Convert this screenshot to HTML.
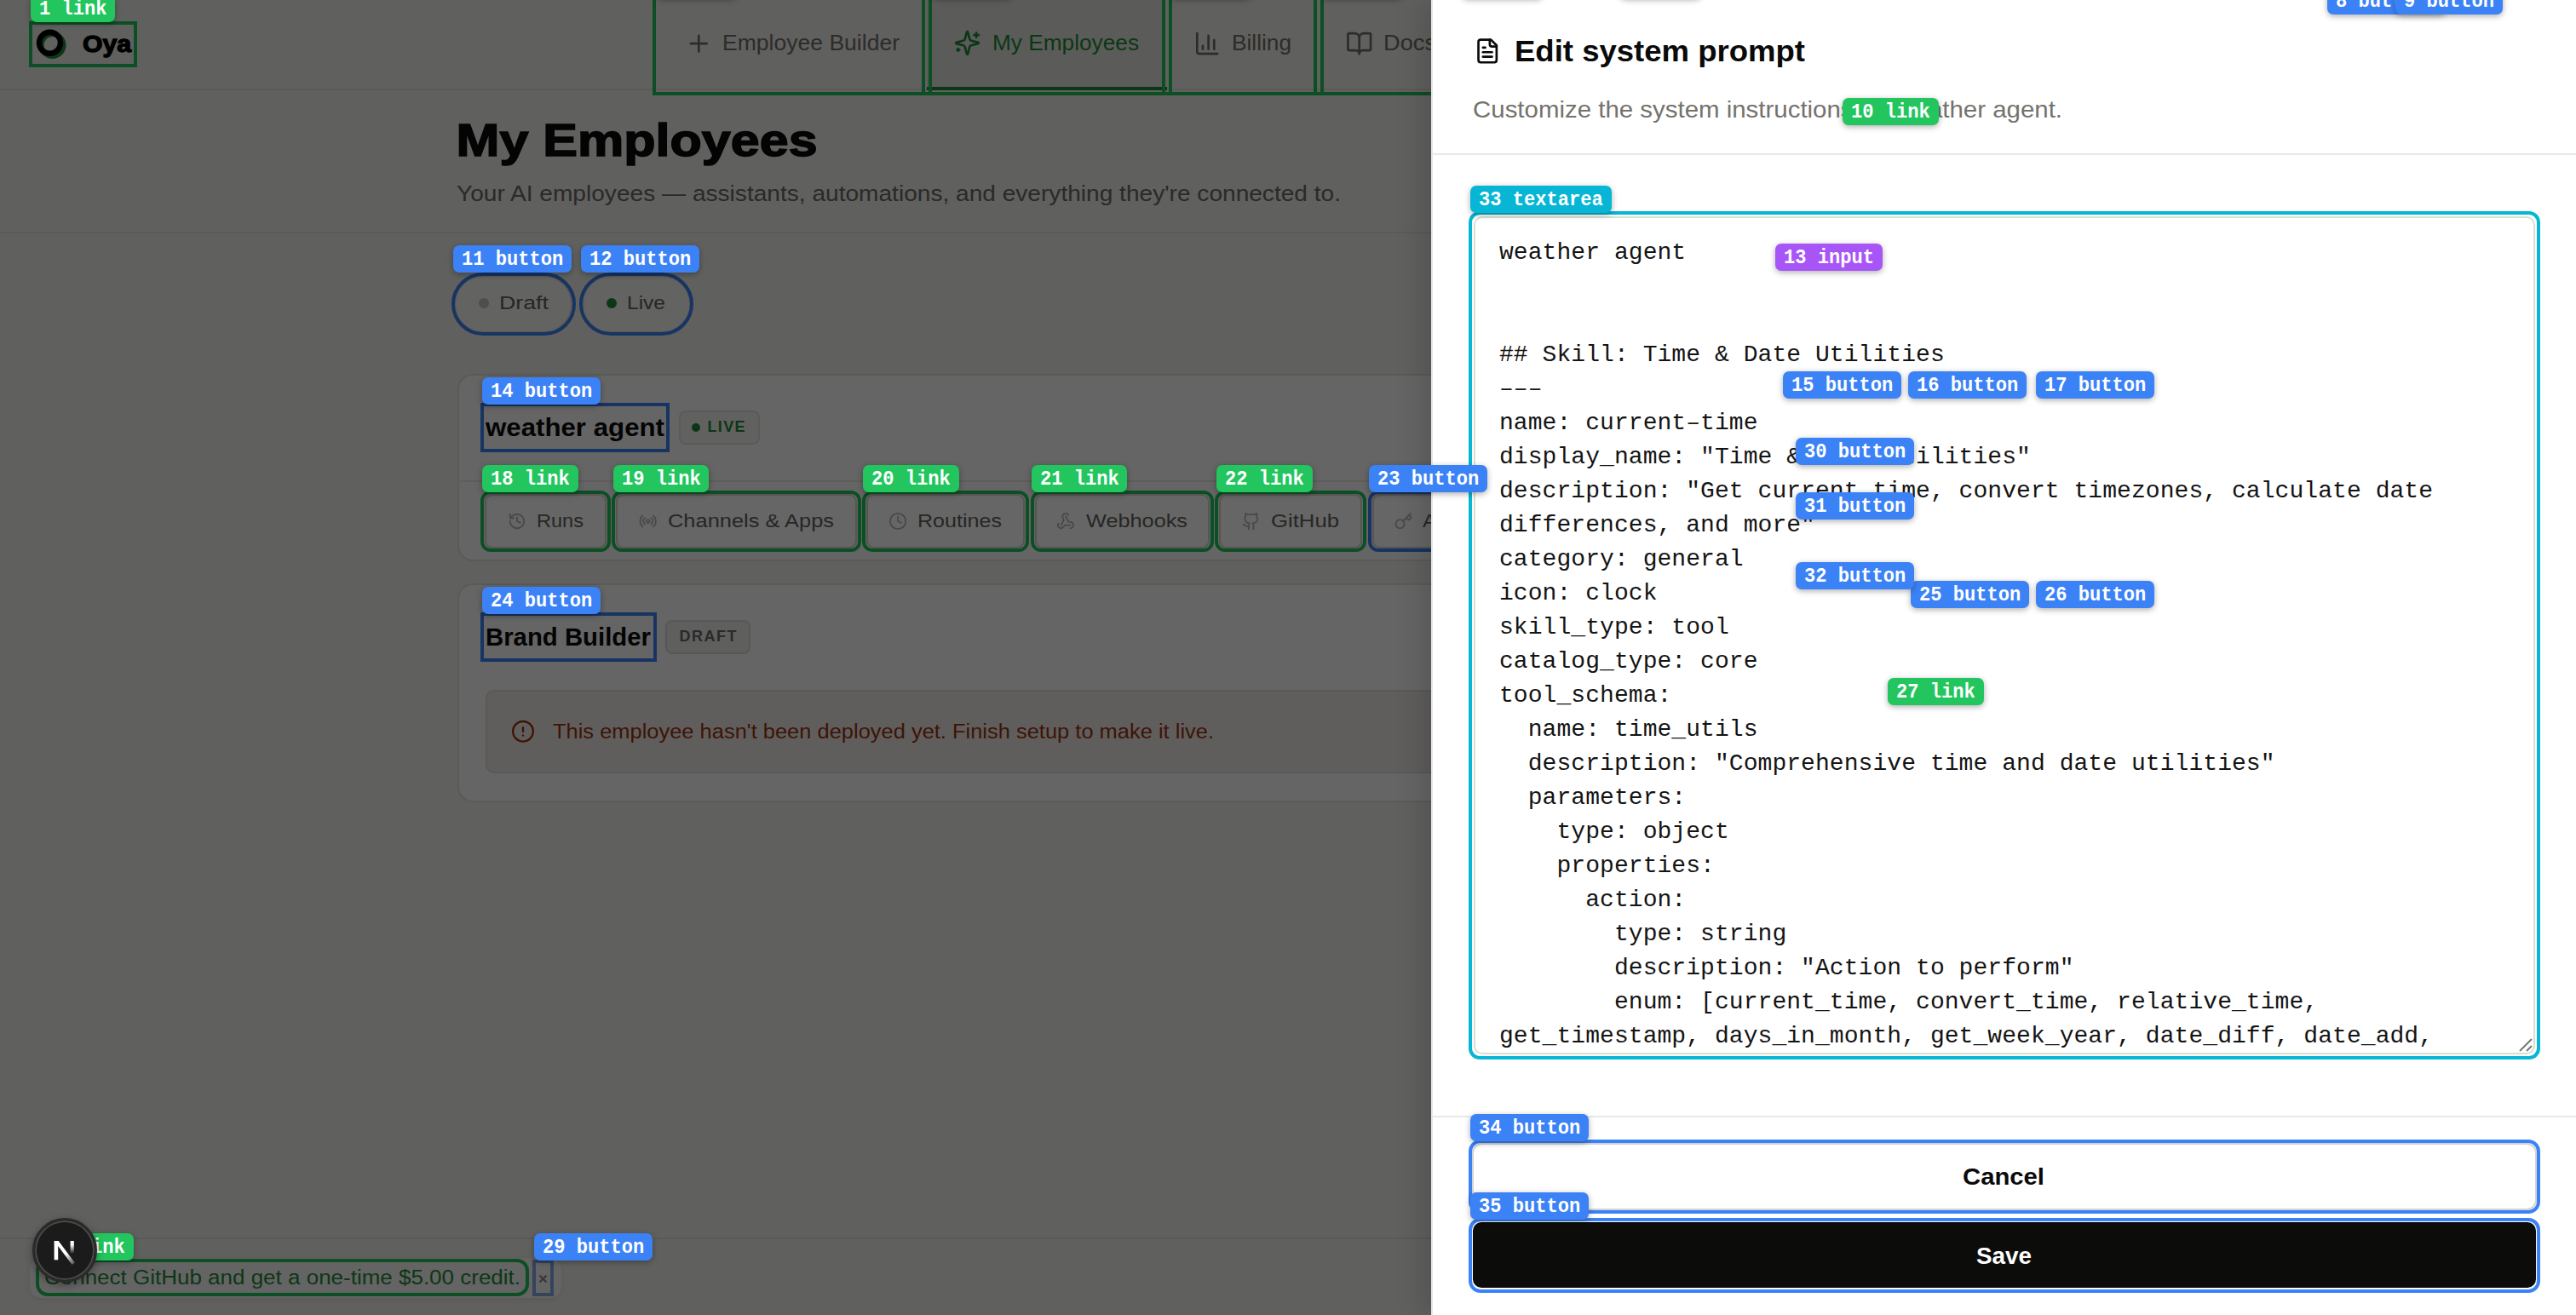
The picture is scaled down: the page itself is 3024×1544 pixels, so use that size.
<!DOCTYPE html><html><head><meta charset="utf-8"><style>
html,body{margin:0;padding:0;width:3024px;height:1544px;overflow:hidden;background:#f1f0ea;}
.a{position:absolute;box-sizing:border-box;}
.lbl span{display:inline-block;position:relative;top:3.2px;transform:scaleX(.92);transform-origin:0 0;}
.lbl{height:32px;line-height:32px;padding:0 0 0 10px;border-radius:7px;color:#fff;font:700 24px "Liberation Mono",monospace;white-space:nowrap;box-shadow:0 2px 7px rgba(0,0,0,.32);overflow:hidden;}
</style></head><body>
<div class="a" style="left:0px;top:0px;width:1680px;height:1544px;background:#f1f0ea;"></div>
<div class="a" style="left:0px;top:104px;width:1680px;height:2px;background:#e4e2dc;"></div>
<div class="a" style="left:0px;top:272px;width:1680px;height:2px;background:#e4e2dc;"></div>
<div class="a" style="left:1088px;top:0px;width:280px;height:102px;background:#e3e7de;"></div>
<div class="a" style="left:1088px;top:102px;width:282px;height:4px;background:#1f8a3a;"></div>
<div class="a" style="left:533px;top:323px;width:139px;height:68px;border:2px solid #e2e0da;border-radius:34px;background:#f8f7f4;"></div>
<div class="a" style="left:683px;top:323px;width:128px;height:68px;border:2px solid #e2e0da;border-radius:34px;background:#f8f7f4;"></div>
<div class="a" style="left:562px;top:350px;width:12px;height:12px;background:#c4c4c0;border-radius:6px;"></div>
<div class="a" style="left:712px;top:350px;width:12px;height:12px;background:#1f8a3a;border-radius:6px;"></div>
<div class="a" style="left:537px;top:439px;width:1363px;height:220px;border:2px solid #e2e0da;border-radius:18px;background:#fdfdfc;"></div>
<div class="a" style="left:537px;top:564px;width:1143px;height:2px;background:#ebe9e4;"></div>
<div class="a" style="left:797px;top:482px;width:95px;height:40px;border:2px solid #e3e1dc;border-radius:8px;background:#f3f2ee;"></div>
<div class="a" style="left:812px;top:497px;width:10px;height:10px;background:#1f8a3a;border-radius:5px;"></div>
<div class="a" style="left:569px;top:580px;width:143px;height:64px;border:2px solid #d6d4ce;border-radius:9px;background:#fff;"></div>
<div class="a" style="left:723px;top:580px;width:283px;height:64px;border:2px solid #d6d4ce;border-radius:9px;background:#fff;"></div>
<div class="a" style="left:1017px;top:580px;width:186px;height:64px;border:2px solid #d6d4ce;border-radius:9px;background:#fff;"></div>
<div class="a" style="left:1215px;top:580px;width:205px;height:64px;border:2px solid #d6d4ce;border-radius:9px;background:#fff;"></div>
<div class="a" style="left:1431px;top:580px;width:168px;height:64px;border:2px solid #d6d4ce;border-radius:9px;background:#fff;"></div>
<div class="a" style="left:1611px;top:580px;width:169px;height:64px;border:2px solid #d6d4ce;border-radius:9px;background:#fff;"></div>
<div class="a" style="left:537px;top:685px;width:1363px;height:257px;border:2px solid #e2e0da;border-radius:18px;background:#fdfdfc;"></div>
<div class="a" style="left:781px;top:728px;width:100px;height:40px;border:2px solid #dcdad4;border-radius:8px;background:#eeede9;"></div>
<div class="a" style="left:570px;top:810px;width:1330px;height:98px;border:2px solid #e3dcd6;border-radius:10px;background:#efebe7;"></div>
<div class="a" style="left:0px;top:1453px;width:1680px;height:2px;background:#e4e2dc;"></div>
<div class="a" style="left:35px;top:1477px;width:624px;height:47px;background:#fbfbf9;border-radius:14px;box-shadow:0 2px 8px rgba(0,0,0,.08);"></div>
<svg class="a" style="left:0;top:0;" width="3024" height="1544" viewBox="0 0 3024 1544"><circle cx="61.5" cy="53" r="13" fill="none" stroke="#1f8a3a" stroke-width="6"/><circle cx="58.5" cy="50.3" r="12.5" fill="none" stroke="#000" stroke-width="6.5"/><text x="97" y="61.3" font-family="Liberation Sans" font-size="28" font-weight="700" fill="#000" textLength="57" lengthAdjust="spacingAndGlyphs" stroke="#000" stroke-width="1.3">Oya</text><g transform="translate(804.3,35.2) scale(1.3333333333333333)" fill="none" stroke="#6e6e6a" stroke-width="2" stroke-linecap="round" stroke-linejoin="round"><path d="M5 12h14"/><path d="M12 5v14"/></g><text x="848" y="59" font-family="Liberation Sans" font-size="26.5" font-weight="400" fill="#6e6e6a" textLength="208" lengthAdjust="spacingAndGlyphs" stroke="#6e6e6a" stroke-width="0">Employee Builder</text><g transform="translate(1119.5,34.5) scale(1.3333333333333333)" fill="none" stroke="#1f8a3a" stroke-width="2" stroke-linecap="round" stroke-linejoin="round"><path d="M9.937 15.5A2 2 0 0 0 8.5 14.063l-6.135-1.582a.5.5 0 0 1 0-.962L8.5 9.936A2 2 0 0 0 9.937 8.5l1.582-6.135a.5.5 0 0 1 .963 0L14.063 8.5A2 2 0 0 0 15.5 9.937l6.135 1.581a.5.5 0 0 1 0 .964L15.5 14.063a2 2 0 0 0-1.437 1.437l-1.582 6.135a.5.5 0 0 1-.963 0z"/><path d="M20 3v4"/><path d="M22 5h-4"/><path d="M4 17v2"/><path d="M5 18H3"/></g><text x="1165" y="59" font-family="Liberation Sans" font-size="26.5" font-weight="400" fill="#1f8a3a" textLength="172" lengthAdjust="spacingAndGlyphs" stroke="#1f8a3a" stroke-width="0">My Employees</text><g transform="translate(1401.3,35.1) scale(1.3333333333333333)" fill="none" stroke="#6e6e6a" stroke-width="2" stroke-linecap="round" stroke-linejoin="round"><path d="M3 3v16a2 2 0 0 0 2 2h16"/><path d="M18 17V9"/><path d="M13 17V5"/><path d="M8 17v-3"/></g><text x="1446" y="59" font-family="Liberation Sans" font-size="26.5" font-weight="400" fill="#6e6e6a" textLength="70" lengthAdjust="spacingAndGlyphs" stroke="#6e6e6a" stroke-width="0">Billing</text><g transform="translate(1579.7,35.1) scale(1.3333333333333333)" fill="none" stroke="#6e6e6a" stroke-width="2" stroke-linecap="round" stroke-linejoin="round"><path d="M12 7v14"/><path d="M3 18a1 1 0 0 1-1-1V4a1 1 0 0 1 1-1h5a4 4 0 0 1 4 4 4 4 0 0 1 4-4h5a1 1 0 0 1 1 1v13a1 1 0 0 1-1 1h-6a3 3 0 0 0-3 3 3 3 0 0 0-3-3z"/></g><text x="1624" y="59" font-family="Liberation Sans" font-size="26.5" font-weight="400" fill="#6e6e6a" textLength="62" lengthAdjust="spacingAndGlyphs" stroke="#6e6e6a" stroke-width="0">Docs</text><text x="535.6" y="183.4" font-family="Liberation Sans" font-size="54" font-weight="700" fill="#0a0a0a" textLength="424" lengthAdjust="spacingAndGlyphs" stroke="#0a0a0a" stroke-width="1.6">My Employees</text><text x="536" y="235.5" font-family="Liberation Sans" font-size="25" font-weight="400" fill="#6a6a66" textLength="1038" lengthAdjust="spacingAndGlyphs" >Your AI employees — assistants, automations, and everything they&#x27;re connected to.</text><text x="586" y="362.6" font-family="Liberation Sans" font-size="22.5" font-weight="400" fill="#5f5f5b" textLength="58" lengthAdjust="spacingAndGlyphs" stroke="#5f5f5b" stroke-width="0">Draft</text><text x="736" y="362.6" font-family="Liberation Sans" font-size="22.5" font-weight="400" fill="#5f5f5b" textLength="45" lengthAdjust="spacingAndGlyphs" stroke="#5f5f5b" stroke-width="0">Live</text><text x="570" y="512" font-family="Liberation Sans" font-size="30" font-weight="700" fill="#0a0a0a" textLength="210" lengthAdjust="spacingAndGlyphs" >weather agent</text><text x="830.5" y="507.2" font-family="Liberation Sans" font-size="18" font-weight="700" fill="#1f8a3a" textLength="44" lengthAdjust="spacing" >LIVE</text><g transform="translate(596,601) scale(0.9166666666666666)" fill="none" stroke="#b5b5b0" stroke-width="2" stroke-linecap="round" stroke-linejoin="round"><path d="M3 12a9 9 0 1 0 9-9 9.75 9.75 0 0 0-6.74 2.74L3 8"/><path d="M3 3v5h5"/><path d="M12 7v5l4 2"/></g><text x="630" y="618.6" font-family="Liberation Sans" font-size="22.5" font-weight="400" fill="#5f5f5b" textLength="55" lengthAdjust="spacingAndGlyphs" stroke="#5f5f5b" stroke-width="0">Runs</text><g transform="translate(749.7,601) scale(0.9166666666666666)" fill="none" stroke="#b5b5b0" stroke-width="2" stroke-linecap="round" stroke-linejoin="round"><path d="M4.9 19.1C1 15.2 1 8.8 4.9 4.9"/><path d="M7.8 16.2c-2.3-2.3-2.3-6.1 0-8.5"/><circle cx="12" cy="12" r="2"/><path d="M16.2 7.8c2.3 2.3 2.3 6.1 0 8.5"/><path d="M19.1 4.9C23 8.8 23 15.1 19.1 19"/></g><text x="784" y="618.6" font-family="Liberation Sans" font-size="22.5" font-weight="400" fill="#5f5f5b" textLength="195" lengthAdjust="spacingAndGlyphs" stroke="#5f5f5b" stroke-width="0">Channels &amp; Apps</text><g transform="translate(1043.1,601) scale(0.9166666666666666)" fill="none" stroke="#b5b5b0" stroke-width="2" stroke-linecap="round" stroke-linejoin="round"><circle cx="12" cy="12" r="10"/><polyline points="12 6 12 12 16 14"/></g><text x="1077" y="618.6" font-family="Liberation Sans" font-size="22.5" font-weight="400" fill="#5f5f5b" textLength="99" lengthAdjust="spacingAndGlyphs" stroke="#5f5f5b" stroke-width="0">Routines</text><g transform="translate(1240,601) scale(0.9166666666666666)" fill="none" stroke="#b5b5b0" stroke-width="2" stroke-linecap="round" stroke-linejoin="round"><path d="M18 16.98h-5.99c-1.1 0-1.95.94-2.48 1.9A4 4 0 0 1 2 17c.01-.7.2-1.4.57-2"/><path d="m6 17 3.13-5.78c.53-.97.1-2.18-.5-3.1a4 4 0 1 1 6.89-4.06"/><path d="m12 6 3.13 5.73C15.66 12.7 16.9 13 18 13a4 4 0 0 1 0 8"/></g><text x="1275" y="618.6" font-family="Liberation Sans" font-size="22.5" font-weight="400" fill="#5f5f5b" textLength="119" lengthAdjust="spacingAndGlyphs" stroke="#5f5f5b" stroke-width="0">Webhooks</text><g transform="translate(1457.7,601) scale(0.9166666666666666)" fill="none" stroke="#b5b5b0" stroke-width="2" stroke-linecap="round" stroke-linejoin="round"><path d="M15 22v-4a4.8 4.8 0 0 0-1-3.5c3 0 6-2 6-5.5.08-1.25-.27-2.48-1-3.5.28-1.15.28-2.35 0-3.5 0 0-1 0-3 1.5-2.64-.5-5.36-.5-8 0C6 2 5 2 5 2c-.3 1.15-.3 2.35 0 3.5A5.403 5.403 0 0 0 4 9c0 3.5 3 5.5 6 5.5-.39.49-.68 1.05-.85 1.65-.17.6-.22 1.23-.15 1.85v4"/><path d="M9 18c-4.51 2-5-2-7-2"/></g><text x="1492" y="618.6" font-family="Liberation Sans" font-size="22.5" font-weight="400" fill="#5f5f5b" textLength="80" lengthAdjust="spacingAndGlyphs" stroke="#5f5f5b" stroke-width="0">GitHub</text><g transform="translate(1636.7,601) scale(0.9166666666666666)" fill="none" stroke="#b5b5b0" stroke-width="2" stroke-linecap="round" stroke-linejoin="round"><path d="m15.5 7.5 2.3 2.3a1 1 0 0 0 1.4 0l2.1-2.1a1 1 0 0 0 0-1.4L19 4"/><path d="m21 2-9.6 9.6"/><circle cx="7.5" cy="15.5" r="5.5"/></g><text x="1670" y="618.6" font-family="Liberation Sans" font-size="22.5" font-weight="400" fill="#5f5f5b" textLength="100" lengthAdjust="spacingAndGlyphs" stroke="#5f5f5b" stroke-width="0">API Keys</text><text x="570" y="758.2" font-family="Liberation Sans" font-size="30" font-weight="700" fill="#0a0a0a" textLength="194" lengthAdjust="spacingAndGlyphs" >Brand Builder</text><text x="797.5" y="753" font-family="Liberation Sans" font-size="18" font-weight="700" fill="#6a6a66" textLength="67" lengthAdjust="spacing" >DRAFT</text><g transform="translate(599.8,844.6) scale(1.1833333333333333)" fill="none" stroke="#9a3412" stroke-width="2" stroke-linecap="round" stroke-linejoin="round"><circle cx="12" cy="12" r="10"/><line x1="12" x2="12" y1="8" y2="12"/><line x1="12" x2="12.01" y1="16" y2="16"/></g><text x="649" y="867" font-family="Liberation Sans" font-size="23.5" font-weight="400" fill="#9a3412" textLength="776" lengthAdjust="spacingAndGlyphs" >This employee hasn&#x27;t been deployed yet. Finish setup to make it live.</text><text x="52" y="1507.5" font-family="Liberation Sans" font-size="23" font-weight="400" fill="#1f8a3a" textLength="559" lengthAdjust="spacingAndGlyphs" stroke="#1f8a3a" stroke-width="0">Connect GitHub and get a one-time $5.00 credit.</text><path d="M633.5 1497.5l8 8M641.5 1497.5l-8 8" stroke="#8a8a86" stroke-width="2.2"/></svg>
<div class="a" style="left:34px;top:25px;width:127px;height:54px;border:4px solid #22c55e;border-radius:0px;"></div>
<div class="a" style="left:766px;top:-4px;width:320px;height:116px;border:4px solid #22c55e;border-radius:0px;"></div>
<div class="a" style="left:766px;top:108px;width:914px;height:4px;background:#22c55e;"></div>
<div class="a" style="left:1090px;top:-4px;width:278px;height:116px;border:4px solid #22c55e;border-radius:0px;"></div>
<div class="a" style="left:1372px;top:-4px;width:174px;height:116px;border:4px solid #22c55e;border-radius:0px;"></div>
<div class="a" style="left:1550px;top:-4px;width:210px;height:116px;border:4px solid #22c55e;border-radius:0px;"></div>
<div class="a" style="left:530px;top:320px;width:146px;height:74px;border:4px solid #3b82f6;border-radius:37px;"></div>
<div class="a" style="left:680px;top:320px;width:134px;height:74px;border:4px solid #3b82f6;border-radius:37px;"></div>
<div class="a" style="left:564px;top:473px;width:222px;height:58px;border:4px solid #3b82f6;border-radius:0px;"></div>
<div class="a" style="left:564px;top:576px;width:153px;height:72px;border:4px solid #22c55e;border-radius:12px;"></div>
<div class="a" style="left:718px;top:576px;width:293px;height:72px;border:4px solid #22c55e;border-radius:12px;"></div>
<div class="a" style="left:1012px;top:576px;width:196px;height:72px;border:4px solid #22c55e;border-radius:12px;"></div>
<div class="a" style="left:1210px;top:576px;width:215px;height:72px;border:4px solid #22c55e;border-radius:12px;"></div>
<div class="a" style="left:1426px;top:576px;width:178px;height:72px;border:4px solid #22c55e;border-radius:12px;"></div>
<div class="a" style="left:1606px;top:576px;width:194px;height:72px;border:4px solid #3b82f6;border-radius:12px;"></div>
<div class="a" style="left:564px;top:719px;width:207px;height:58px;border:4px solid #3b82f6;border-radius:0px;"></div>
<div class="a" style="left:42px;top:1478px;width:579px;height:44px;border:4px solid #22c55e;border-radius:14px;"></div>
<div class="a" style="left:625px;top:1479px;width:25px;height:43px;border:4px solid #84a9e6;border-radius:0px;"></div>
<div class="a" style="left:0px;top:0px;width:3024px;height:1544px;background:rgba(0,0,0,.6);"></div>
<div class="a" style="left:1680px;top:0px;width:1344px;height:1544px;background:#fff;border-left:2px solid #e6e6e6;box-shadow:-10px 0 30px rgba(0,0,0,.15);"></div>
<div class="a" style="left:1680px;top:180px;width:1344px;height:2px;background:#e8e8e6;"></div>
<div class="a" style="left:1680px;top:1310px;width:1344px;height:2px;background:#e8e8e6;"></div>
<div class="a" style="left:1730px;top:254px;width:1246px;height:984px;border:2px solid #d5e2d3;border-radius:10px;background:#fff;"></div>
<div class="a" style="left:1728px;top:1342px;width:1250px;height:79px;border:2px solid #d4d4d2;border-radius:12px;background:#fff;"></div>
<div class="a" style="left:1729px;top:1435px;width:1248px;height:77px;background:#0c0c0b;border-radius:10px;"></div>
<svg class="a" style="left:0;top:0;" width="3024" height="1544" viewBox="0 0 3024 1544"><g transform="translate(1730.2,43.95) scale(1.3333333333333333)" fill="none" stroke="#0a0a0a" stroke-width="2" stroke-linecap="round" stroke-linejoin="round"><path d="M15 2H6a2 2 0 0 0-2 2v16a2 2 0 0 0 2 2h12a2 2 0 0 0 2-2V7Z"/><path d="M14 2v4a2 2 0 0 0 2 2h4"/><path d="M10 9H8"/><path d="M16 13H8"/><path d="M16 17H8"/></g><text x="1778" y="71.6" font-family="Liberation Sans" font-size="35" font-weight="700" fill="#0a0a0a" textLength="341" lengthAdjust="spacingAndGlyphs" >Edit system prompt</text><text x="1729" y="137.5" font-family="Liberation Sans" font-size="28" font-weight="400" fill="#73736c" textLength="692" lengthAdjust="spacingAndGlyphs" >Customize the system instructions for weather agent.</text><text x="2304" y="1391" font-family="Liberation Sans" font-size="28" font-weight="700" fill="#0a0a0a" textLength="96" lengthAdjust="spacingAndGlyphs" >Cancel</text><text x="2320" y="1483.5" font-family="Liberation Sans" font-size="28" font-weight="700" fill="#ffffff" textLength="65" lengthAdjust="spacingAndGlyphs" >Save</text><path d="M2958 1234L2972 1220M2966 1234L2972 1228" stroke="#777" stroke-width="2"/></svg>
<pre class="a" style="left:1760px;top:277px;margin:0;font:28px/40px 'Liberation Mono',monospace;color:#141414;letter-spacing:0.06px;">weather agent


## Skill: Time &amp; Date Utilities
–––
name: current–time
display_name: &quot;Time &amp; Date Utilities&quot;
description: &quot;Get current time, convert timezones, calculate date
differences, and more&quot;
category: general
icon: clock
skill_type: tool
catalog_type: core
tool_schema:
  name: time_utils
  description: &quot;Comprehensive time and date utilities&quot;
  parameters:
    type: object
    properties:
      action:
        type: string
        description: &quot;Action to perform&quot;
        enum: [current_time, convert_time, relative_time,
get_timestamp, days_in_month, get_week_year, date_diff, date_add,</pre>
<div class="a" style="left:1724px;top:248px;width:1258px;height:996px;border:4px solid #06b6d4;border-radius:13px;"></div>
<div class="a" style="left:1724px;top:1338px;width:1258px;height:87px;border:4px solid #3b82f6;border-radius:14px;"></div>
<div class="a" style="left:1724px;top:1430px;width:1258px;height:88px;border:4px solid #3b82f6;border-radius:14px;"></div>
<div class="a lbl" style="left:770px;top:-34px;background:#22c55e;width:95px;"><span>x button</span></div>
<div class="a lbl" style="left:1094px;top:-34px;background:#22c55e;width:95px;"><span>x button</span></div>
<div class="a lbl" style="left:1374px;top:-34px;background:#22c55e;width:95px;"><span>x button</span></div>
<div class="a lbl" style="left:1552px;top:-34px;background:#22c55e;width:95px;"><span>x button</span></div>
<div class="a lbl" style="left:1716px;top:-34px;background:#3b82f6;width:95px;"><span>x button</span></div>
<div class="a lbl" style="left:1902px;top:-34px;background:#3b82f6;width:95px;"><span>x button</span></div>
<div class="a lbl" style="left:36px;top:-6px;background:#22c55e;width:99px;"><span>1 link</span></div>
<div class="a lbl" style="left:2732px;top:-15px;background:#3b82f6;width:139px;"><span>8 button</span></div>
<div class="a lbl" style="left:2812px;top:-15px;background:#3b82f6;width:126px;"><span>9 button</span></div>
<div class="a lbl" style="left:2163px;top:115px;background:#22c55e;width:113px;"><span>10 link</span></div>
<div class="a lbl" style="left:532px;top:288px;background:#3b82f6;width:139px;"><span>11 button</span></div>
<div class="a lbl" style="left:682px;top:288px;background:#3b82f6;width:139px;"><span>12 button</span></div>
<div class="a lbl" style="left:2084px;top:286px;background:#a855f7;width:126px;"><span>13 input</span></div>
<div class="a lbl" style="left:566px;top:443px;background:#3b82f6;width:139px;"><span>14 button</span></div>
<div class="a lbl" style="left:2093px;top:436px;background:#3b82f6;width:139px;"><span>15 button</span></div>
<div class="a lbl" style="left:2240px;top:436px;background:#3b82f6;width:139px;"><span>16 button</span></div>
<div class="a lbl" style="left:2390px;top:436px;background:#3b82f6;width:139px;"><span>17 button</span></div>
<div class="a lbl" style="left:566px;top:546px;background:#22c55e;width:113px;"><span>18 link</span></div>
<div class="a lbl" style="left:720px;top:546px;background:#22c55e;width:112px;"><span>19 link</span></div>
<div class="a lbl" style="left:1013px;top:546px;background:#22c55e;width:113px;"><span>20 link</span></div>
<div class="a lbl" style="left:1211px;top:546px;background:#22c55e;width:112px;"><span>21 link</span></div>
<div class="a lbl" style="left:1428px;top:546px;background:#22c55e;width:113px;"><span>22 link</span></div>
<div class="a lbl" style="left:1607px;top:546px;background:#3b82f6;width:139px;"><span>23 button</span></div>
<div class="a lbl" style="left:566px;top:689px;background:#3b82f6;width:139px;"><span>24 button</span></div>
<div class="a lbl" style="left:2243px;top:682px;background:#3b82f6;width:139px;"><span>25 button</span></div>
<div class="a lbl" style="left:2390px;top:682px;background:#3b82f6;width:139px;"><span>26 button</span></div>
<div class="a lbl" style="left:2216px;top:796px;background:#22c55e;width:113px;"><span>27 link</span></div>
<div class="a lbl" style="left:44px;top:1448px;background:#22c55e;width:113px;"><span>28 link</span></div>
<div class="a lbl" style="left:627px;top:1448px;background:#3b82f6;width:139px;"><span>29 button</span></div>
<div class="a lbl" style="left:2108px;top:514px;background:#3b82f6;width:139px;"><span>30 button</span></div>
<div class="a lbl" style="left:2108px;top:578px;background:#3b82f6;width:139px;"><span>31 button</span></div>
<div class="a lbl" style="left:2108px;top:660px;background:#3b82f6;width:139px;"><span>32 button</span></div>
<div class="a lbl" style="left:1726px;top:218px;background:#06b6d4;width:166px;"><span>33 textarea</span></div>
<div class="a lbl" style="left:1726px;top:1308px;background:#3b82f6;width:139px;"><span>34 button</span></div>
<div class="a lbl" style="left:1726px;top:1400px;background:#3b82f6;width:139px;"><span>35 button</span></div>
<div class="a" style="left:38px;top:1430px;width:76px;height:76px;border-radius:50%;background:#1a1b1a;border:3px solid #2a2a29;box-shadow:inset 0 0 0 2px #4a4a47, 0 3px 10px rgba(0,0,0,.35);"></div>
<svg class="a" style="left:0;top:0" width="3024" height="1544"><defs><linearGradient id="nd" gradientUnits="userSpaceOnUse" x1="70" y1="1462" x2="87" y2="1484"><stop offset="0.45" stop-color="#fff"/><stop offset="1" stop-color="#fff" stop-opacity="0.25"/></linearGradient><linearGradient id="ns" gradientUnits="userSpaceOnUse" x1="0" y1="1457" x2="0" y2="1472"><stop offset="0.3" stop-color="#fff"/><stop offset="1" stop-color="#fff" stop-opacity="0"/></linearGradient></defs><rect x="63.6" y="1457" width="4.6" height="22.3" fill="#fff"/><path d="M63.6 1457H68.6L87.8 1482.6L84.6 1485Z" fill="url(#nd)"/><rect x="82.6" y="1457" width="4.2" height="15" fill="url(#ns)"/></svg>
<script>(function(){var s=window.innerWidth/3024;if(s>0&&Math.abs(s-1)>0.01){document.documentElement.style.zoom=s;}})();</script>
</body></html>
